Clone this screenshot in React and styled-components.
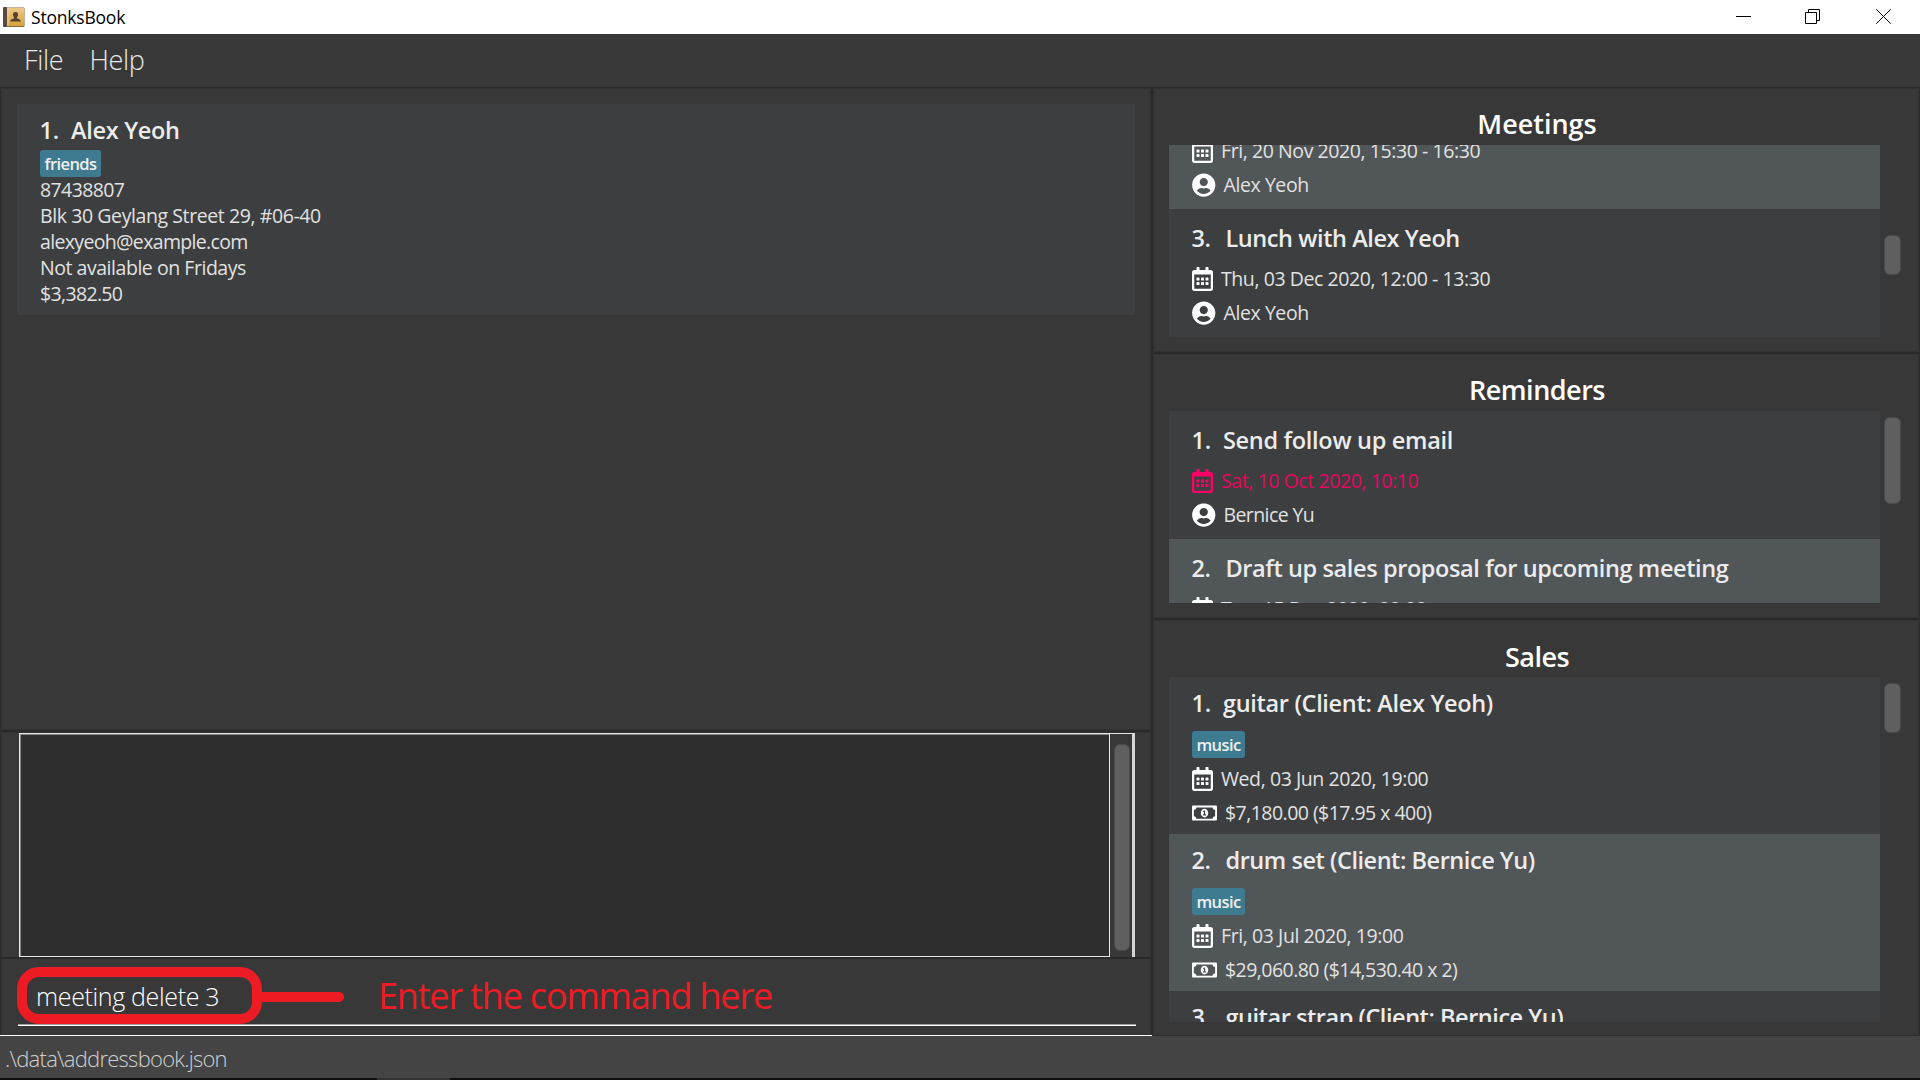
import React from 'react';
import styled, { createGlobalStyle } from 'styled-components';
import { FaRegCalendarAlt, FaRegMoneyBillAlt, FaUserCircle } from 'react-icons/fa';

const GlobalStyle = createGlobalStyle`
  *, *::before, *::after { box-sizing: border-box; }
  body {
    margin: 0;
    background: #383838;
    font-family: 'Open Sans', 'Noto Sans', sans-serif;
    overflow: hidden;
  }
`;

const Window = styled.div`
  width: 1920px;
  height: 1080px;
  display: flex;
  flex-direction: column;
  background: #383838;
  color: #e4e4e4;
  white-space: pre;
  overflow: hidden;
`;

const TitleBar = styled.header`
  height: 34px;
  flex: none;
  display: flex;
  align-items: center;
  background: #fff;
  padding-left: 3px;
`;

const AppIcon = styled.svg`
  width: 22px;
  height: 22px;
`;

const AppTitle = styled.span`
  flex: 1;
  margin-left: 6px;
  color: #000;
  font-size: 17.5px;
  letter-spacing: -0.2px;
  line-height: 34px;
`;

const WindowControls = styled.div`
  display: flex;
  gap: 54px;
  padding-right: 29px;
  height: 34px;
  padding-top: 9px;
`;

const ControlIcon = styled.svg`
  width: 15px;
  height: 15px;
  margin-right: ${(p) => p.$after || 0}px;
  fill: none;
  stroke: #000;
  stroke-width: 1;
`;

const MenuBar = styled.nav`
  height: 53px;
  flex: none;
  display: flex;
  gap: 26px;
  padding-left: 24px;
  font-size: 27px;
  font-weight: 300;
  letter-spacing: -0.3px;
  line-height: 51px;
  color: #e8e8e8;
`;

const Body = styled.main`
  flex: 1;
  min-height: 0;
  display: flex;
  border-top: 1px solid #2a2a2a;
  box-shadow: inset 0 1px #323232;
`;

const LeftColumn = styled.div`
  width: 1150px;
  display: flex;
  flex-direction: column;
  box-shadow: inset 1px 0 #2c2c2c, inset 2px 0 #323232;
`;

const RightColumn = styled.div`
  width: 766px;
  display: flex;
  flex-direction: column;
  padding-top: 1px;
  box-shadow: inset -1px 0 #2c2c2c, inset -2px 0 #323232, inset 0 -1px #2c2c2c;
`;

const VerticalRule = styled.div`
  width: 4px;
  background: #2a2a2a;
  border: solid #323232;
  border-width: 0 1px;
`;

const HorizontalRule = styled.div`
  height: 4px;
  flex: none;
  background: #2a2a2a;
  border: solid #323232;
  border-width: 1px 0;
`;

const ClientPane = styled.section`
  height: 641px;
  flex: none;
  padding: 16px 15px 0 17px;
`;

const ClientCard = styled.article`
  height: 211px;
  padding: 11px 0 0 23px;
  background: #3c3e3f;
`;

const CardTitle = styled.h3`
  margin: 0;
  height: 30px;
  flex: none;
  display: flex;
  font-size: 23.5px;
  font-weight: 600;
  letter-spacing: ${(p) => p.$tracking || -0.3}px;
  line-height: 30px;
  color: #ececec;
`;

const Ordinal = styled.span`
  width: ${(p) => (p.$narrow ? 31 : 33.5)}px;
  margin-left: -0.5px;
  margin-right: 0.5px;
`;

const Tag = styled.span`
  display: block;
  width: ${(p) => p.$width}px;
  height: 27px;
  flex: none;
  margin: ${(p) => p.$gap}px 0 0;
  border-radius: 3px;
  background: #3e7b91;
  color: #f0f0f0;
  font-size: 16.5px;
  font-weight: 600;
  letter-spacing: -0.6px;
  line-height: 27px;
  text-align: center;
`;

const ClientField = styled.div`
  font-size: 19.5px;
  line-height: 26px;
  letter-spacing: ${(p) => p.$tracking}px;
  color: #e2e2e2;
`;

const ResultPane = styled.section`
  height: 226px;
  flex: none;
  display: flex;
  padding: 0 15px 0 17px;
  border-bottom: 2px solid #2a2a2a;
`;

const ResultFrame = styled.div`
  flex: 1;
  height: 224px;
  display: flex;
  border: solid #e4e4e4;
  border-width: 1px 3px 0 0;
  border-right-color: #d6d6d6;
  margin-left: 2px;
`;

const ResultText = styled.div`
  width: 1091px;
  border: solid #e8e8e8;
  border-width: 0 1px 1px 1px;
  background: #2e2e2e;
  box-shadow: inset 1px 1px #858585;
`;

const ResultScroll = styled.div`
  flex: 1;
  padding: 10px 0 0 4px;
`;

const Thumb = styled.div`
  width: ${(p) => p.$width || 17}px;
  height: ${(p) => p.$height}px;
  margin-top: ${(p) => p.$offset || 0}px;
  border: 1px solid #4b4b4b;
  border-radius: 6px;
  background: #5f5f5f;
`;

const CommandPane = styled.section`
  position: relative;
  flex: 1;
  padding-left: 18px;
  border-bottom: 1px solid #fff;
  margin-right: -2px;
`;

const CommandField = styled.div`
  width: 1118px;
  height: 67px;
  padding: 12px 0 0 18px;
  border-bottom: 1px solid #fff;
  box-shadow: inset 0 -1px #9c9c9c;
  color: #fff;
  font-size: 25px;
  font-weight: 300;
  letter-spacing: -0.34px;
  line-height: 50px;
`;

const Callout = styled.div`
  position: absolute;
  left: 17px;
  top: 8px;
  display: flex;
  align-items: center;
  color: #ed1c24;
`;

const CalloutRing = styled.div`
  width: 245px;
  height: 57px;
  border: 10px solid #ed1c24;
  border-radius: 22px;
`;

const CalloutStem = styled.div`
  width: 83px;
  height: 10px;
  margin: 3px 0 0 -1px;
  border-radius: 0 5px 5px 0;
  background: #ed1c24;
`;

const CalloutLabel = styled.span`
  margin-left: 34px;
  font-size: 36px;
  letter-spacing: -1.18px;
  line-height: 56px;
`;

const Panel = styled.section`
  height: ${(p) => p.$height}px;
  flex: none;
`;

const PanelTitle = styled.h2`
  margin: 0;
  height: 56px;
  padding-top: ${(p) => p.$top || 16}px;
  font-size: 27px;
  font-weight: 600;
  letter-spacing: ${(p) => p.$tracking || 0}px;
  line-height: 38px;
  text-align: center;
  color: #fff;
`;

const PanelBody = styled.div`
  display: flex;
  height: ${(p) => p.$height}px;
  padding-left: 15px;
  gap: 4px;
`;

const List = styled.div`
  width: 711px;
  overflow: hidden;
  display: flex;
  flex-direction: column;
`;

const Entry = styled.article`
  height: ${(p) => p.$height}px;
  flex: none;
  display: flex;
  flex-direction: column;
  justify-content: flex-end;
  overflow: hidden;
  padding: 0 0 ${(p) => p.$bottom}px 23px;
  background: ${(p) => (p.$even ? '#515658' : '#3c3e3f')};
`;

const Detail = styled.div`
  height: 28px;
  flex: none;
  display: flex;
  align-items: center;
  gap: 8px;
  margin-top: ${(p) => p.$gap}px;
  color: ${(p) => (p.$overdue ? '#e6055f' : '#e2e2e2')};
  font-size: 19.5px;
  letter-spacing: ${(p) => p.$tracking || -0.42}px;
  line-height: 28px;

  svg {
    flex: none;
    color: ${(p) => (p.$overdue ? '#ff0066' : '#fff')};
  }
`;

const CalendarIcon = styled(FaRegCalendarAlt)`
  width: 21px;
  height: 24px;
`;

const UserIcon = styled(FaUserCircle)`
  width: 23.5px;
  height: 24px;
`;

const MoneyIcon = styled(FaRegMoneyBillAlt)`
  width: 25px;
  height: 20px;
`;

const StatusBar = styled.footer`
  height: 42px;
  flex: none;
  padding: 1px 0 0 5px;
  background: #444;
  color: #d0d0d0;
  font-size: 22px;
  font-weight: 300;
  letter-spacing: -0.74px;
  line-height: 43px;
`;

const TaskbarEdge = styled.div`
  height: 2px;
  flex: none;
  display: flex;
  padding-left: 377px;
  background: #101010;
`;

const TaskbarItem = styled.div`
  width: 73px;
  background: #333;
`;

function EntryTitle({ index, children, tracking }) {
  return (
    <CardTitle $tracking={tracking}>
      <Ordinal $narrow={index === 1}>{index}.</Ordinal>
      {children}
    </CardTitle>
  );
}

function Appointment({ index, title, date, person, even, overdue, height = 128, tracking, personTracking }) {
  return (
    <Entry $height={height} $bottom={10} $even={even}>
      {title && <EntryTitle index={index} tracking={tracking}>{title}</EntryTitle>}
      <Detail $gap={12} $overdue={overdue}><CalendarIcon />{date}</Detail>
      <Detail $gap={6} $tracking={personTracking}><UserIcon />{person}</Detail>
    </Entry>
  );
}

function Sale({ index, title, date, price, even, tracking }) {
  return (
    <Entry $height={157} $bottom={7} $even={even}>
      <EntryTitle index={index} tracking={tracking}>{title}</EntryTitle>
      <Tag $width={53} $gap={13}>{date ? 'music' : ''}</Tag>
      <Detail $gap={7}>{date && <CalendarIcon />}{date}</Detail>
      <Detail $gap={6} $tracking={-0.54}>{price && <MoneyIcon />}{price}</Detail>
    </Entry>
  );
}

const clientFields = [
  ['87438807', -0.6],
  ['Blk 30 Geylang Street 29, #06-40', -0.41],
  ['alexyeoh@example.com', -0.66],
  ['Not available on Fridays', -0.46],
  ['$3,382.50', -0.65],
];

export default function App() {
  return (
    <>
      <GlobalStyle />
      <Window>
        <TitleBar>
          <AppIcon viewBox="0 0 22 22">
            <defs>
              <linearGradient id="cover" x1="0" y1="0" x2="0" y2="1">
                <stop offset="0" stopColor="#ecc989" />
                <stop offset="1" stopColor="#d9a13c" />
              </linearGradient>
            </defs>
            <rect x="0.5" y="1.5" width="21" height="19.5" rx="1" fill="#8a6a3a" />
            <rect x="0" y="1" width="4" height="20" rx="1" fill="#5b4a42" />
            <rect x="4" y="2" width="17" height="18" fill="url(#cover)" />
            <path d="M5 2v18" stroke="#f4dcae" strokeWidth="0.8" />
            <path d="M12.5 6c1.8 0 2.7 1.2 2.6 2.8-.1 1.3-.7 2-1.2 2.6v1.2c1.5.5 3.6.8 3.9 2.9H7.2c.3-2.1 2.4-2.4 3.9-2.9v-1.2c-.5-.6-1.1-1.3-1.2-2.6C9.8 7.2 10.7 6 12.500 6z" fill="#54422c" />
          </AppIcon>
          <AppTitle>StonksBook</AppTitle>
          <WindowControls>
            <ControlIcon viewBox="0 0 15 15"><path d="M0 7.5h15" /></ControlIcon>
            <ControlIcon viewBox="0 0 15 15" $after={2}>
              <path d="M0.5 3.5h11v11h-11z M3.5 3.5v-3h11v11h-3" />
            </ControlIcon>
            <ControlIcon viewBox="0 0 15 15"><path d="M0.3 0.3l14.4 14.4M14.7 0.3l-14.4 14.4" /></ControlIcon>
          </WindowControls>
        </TitleBar>
        <MenuBar>
          <span>File</span>
          <span>Help</span>
        </MenuBar>
        <Body>
          <LeftColumn>
            <ClientPane>
              <ClientCard>
                <EntryTitle index={1}>Alex Yeoh</EntryTitle>
                <Tag $width={61} $gap={5}>friends</Tag>
                {clientFields.map(([text, tracking]) => (
                  <ClientField key={text} $tracking={tracking}>{text}</ClientField>
                ))}
              </ClientCard>
            </ClientPane>
            <HorizontalRule />
            <ResultPane>
              <ResultFrame>
                <ResultText />
                <ResultScroll><Thumb $width={16} $height={207} /></ResultScroll>
              </ResultFrame>
            </ResultPane>
            <CommandPane>
              <CommandField>meeting delete 3</CommandField>
              <Callout>
                <CalloutRing />
                <CalloutStem />
                <CalloutLabel>Enter the command here</CalloutLabel>
              </Callout>
            </CommandPane>
          </LeftColumn>
          <VerticalRule />
          <RightColumn>
            <Panel $height={262}>
              <PanelTitle>Meetings</PanelTitle>
              <PanelBody $height={192}>
                <List>
                  <Appointment even height={64} date="Fri, 20 Nov 2020, 15:30 - 16:30" person="Alex Yeoh" />
                  <Appointment index={3} title="Lunch with Alex Yeoh" tracking={-0.42} date="Thu, 03 Dec 2020, 12:00 - 13:30" person="Alex Yeoh" />
                </List>
                <Thumb $height={40} $offset={90} />
              </PanelBody>
            </Panel>
            <HorizontalRule />
            <Panel $height={262}>
              <PanelTitle $tracking={-0.5}>Reminders</PanelTitle>
              <PanelBody $height={192}>
                <List>
                  <Appointment index={1} title="Send follow up email" date="Sat, 10 Oct 2020, 10:10" person="Bernice Yu" personTracking={-0.6} overdue />
                  <Appointment index={2} title="Draft up sales proposal for upcoming meeting" tracking={-0.39} date="Tue, 15 Dec 2020, 00:00" person="Bernice Yu" even />
                </List>
                <Thumb $height={87} $offset={6} />
              </PanelBody>
            </Panel>
            <HorizontalRule />
            <Panel $height={401}>
              <PanelTitle $tracking={-0.5} $top={17}>Sales</PanelTitle>
              <PanelBody $height={345}>
                <List>
                  <Sale index={1} title="guitar (Client: Alex Yeoh)" tracking={-0.32} date="Wed, 03 Jun 2020, 19:00" price="$7,180.00 ($17.95 x 400)" />
                  <Sale index={2} title="drum set (Client: Bernice Yu)" tracking={-0.46} date="Fri, 03 Jul 2020, 19:00" price="$29,060.80 ($14,530.40 x 2)" even />
                  <Sale index={3} title="guitar strap (Client: Bernice Yu)" tracking={-0.46} />
                </List>
                <Thumb $height={50} $offset={6} />
              </PanelBody>
            </Panel>
          </RightColumn>
        </Body>
        <StatusBar>.\data\addressbook.json</StatusBar>
        <TaskbarEdge><TaskbarItem /></TaskbarEdge>
      </Window>
    </>
  );
}
